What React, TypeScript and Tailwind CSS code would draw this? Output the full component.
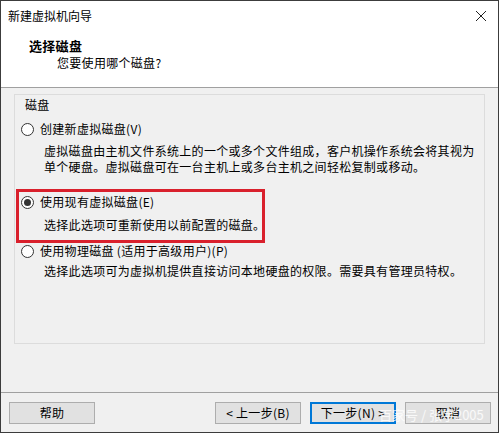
const font = { fontFamily: '"Noto Sans CJK SC", "Noto Sans", sans-serif' };

function Radio({ checked }: { checked?: boolean }) {
    return (
        <span className="w-[13px] h-[13px] rounded-full border border-[#333333] bg-white flex items-center justify-center shrink-0">
            {checked && <span className="w-[7px] h-[7px] rounded-full bg-[#333333]" />}
        </span>
    );
}

function Button({ label, primary }: { label: string; primary?: boolean }) {
    return (
        <button
            className={`w-[86px] h-[22px] bg-[#e1e1e1] text-[12px] leading-4 text-black flex items-center justify-center ${
                primary ? 'border-2 border-[#0078d7]' : 'border border-[#adadad]'
            }`}
        >
            {label}
        </button>
    );
}

export default function App() {
    return (
        <div
            className="relative w-[499px] h-[433px] border border-[#3c3c3c] bg-[#f0f0f0] flex flex-col text-black tracking-[0.3px]"
            style={font}
        >
            {/* HEADER */}
            <div className="bg-white h-[87px] border-b border-[#a0a0a0] flex flex-col">
                <div className="h-[30px] flex items-center justify-between pl-[7px] pr-[10px]">
                    <span className="text-[12px] leading-4 tracking-normal">新建虚拟机向导</span>
                    <svg width="12" height="12" viewBox="0 0 12 12" className="mr-[1px]">
                        <path d="M1 1 L11 11 M11 1 L1 11" stroke="#222" strokeWidth="1" />
                    </svg>
                </div>
                <div className="mt-[7px] pl-[28px] text-[13px] leading-4 font-bold">选择磁盘</div>
                <div className="mt-[1px] pl-[56px] text-[12px] leading-4">您要使用哪个磁盘?</div>
            </div>

            {/* BODY */}
            <div className="flex-1 px-[13px] pt-[6px]">
                <div className="h-[250px] border border-[#dcdcdc] pl-[6px] pt-[2px]">
                    <div className="text-[12px] leading-4 pl-[4px]">磁盘</div>

                    <div className="mt-[8px] flex items-center gap-[6px] h-4">
                        <Radio />
                        <span className="text-[12px] leading-4">创建新虚拟磁盘(V)</span>
                    </div>
                    <div className="mt-[6px] pl-[23px] text-[12px] leading-4">
                        <div>虚拟磁盘由主机文件系统上的一个或多个文件组成，客户机操作系统会将其视为</div>
                        <div>单个硬盘。虚拟磁盘可在一台主机上或多台主机之间轻松复制或移动。</div>
                    </div>

                    <div className="mt-[19px] flex items-center gap-[6px] h-4">
                        <Radio checked />
                        <span className="text-[12px] leading-4">使用现有虚拟磁盘(E)</span>
                    </div>
                    <div className="mt-[7px] pl-[23px] text-[12px] leading-4">选择此选项可重新使用以前配置的磁盘。</div>

                    <div className="mt-[10px] flex items-center gap-[6px] h-4">
                        <Radio />
                        <span className="text-[12px] leading-4">使用物理磁盘 (适用于高级用户)(P)</span>
                    </div>
                    <div className="mt-[4px] pl-[23px] text-[12px] leading-4">选择此选项可为虚拟机提供直接访问本地硬盘的权限。需要具有管理员特权。</div>
                </div>
            </div>

            {/* FOOTER */}
            <div className="h-[40px] border-t border-[#a0a0a0] flex items-start pt-[9px] pl-[8px] pr-[7px]">
                <Button label="帮助" />
                <div className="ml-auto flex gap-[9px]">
                    <Button label="< 上一步(B)" />
                    <Button label="下一步(N) >" primary />
                    <Button label="取消" />
                </div>
            </div>

            {/* annotation */}
            <div className="absolute left-[15px] top-[188px] w-[249px] h-[54px] border-[3px] border-[#d9202c] pointer-events-none" />

            {/* watermark */}
            <div className="absolute left-[378px] top-[406px] text-[13px] leading-4 text-white/80 tracking-normal pointer-events-none">
                百家号 / 张宇2005
            </div>
        </div>
    );
}
